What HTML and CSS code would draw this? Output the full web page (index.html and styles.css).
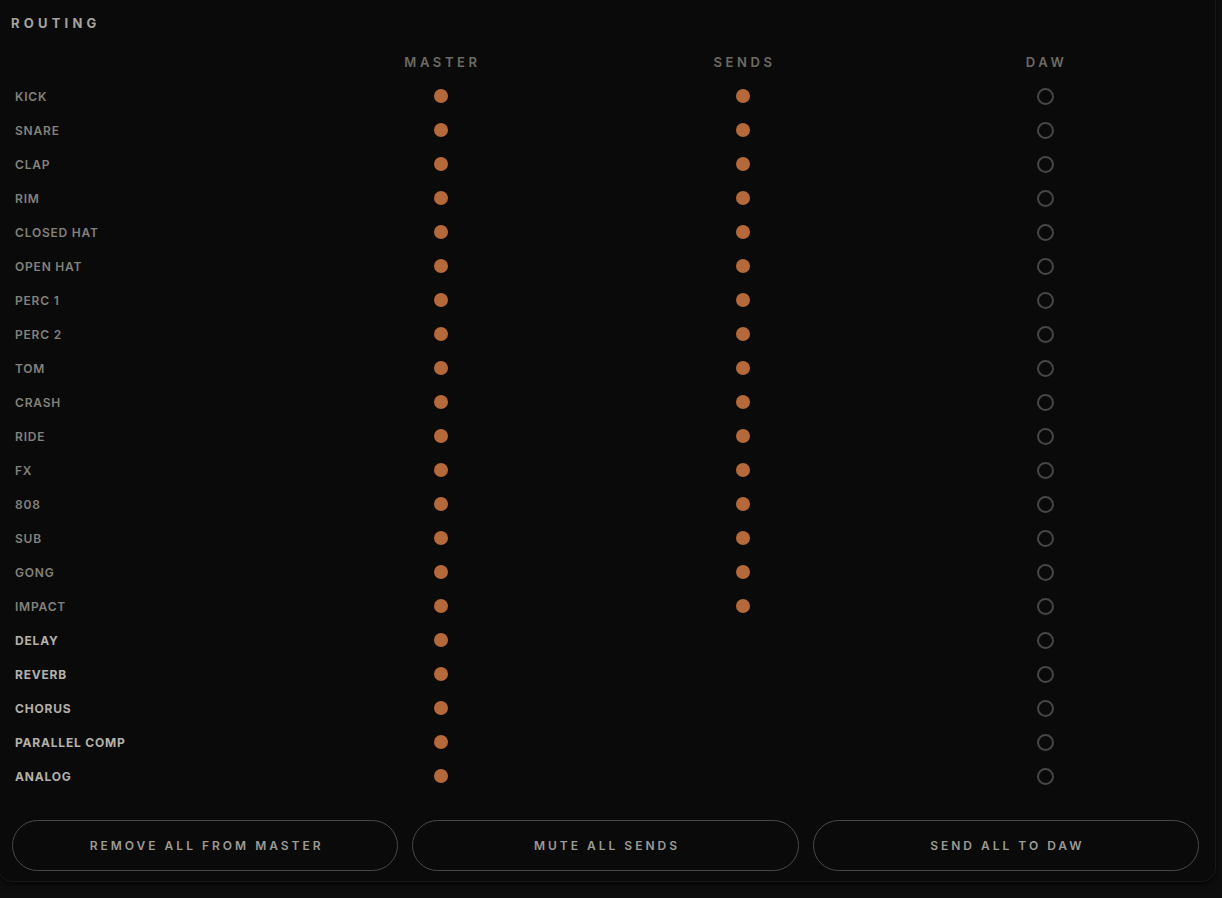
FILE: index.html
```html
<!DOCTYPE html>
<html>
<head>
<meta charset="utf-8">
<link rel="stylesheet" href="styles.css">
</head>
<body>
<div class="panel">
  <div class="title">ROUTING</div>
  <div class="grid">
    <div class="head-spacer"></div>
    <div class="col-head">MASTER</div>
    <div class="col-head">SENDS</div>
    <div class="col-head">DAW</div>

    <div class="label">KICK</div><div class="cell"><span class="dot on"></span></div><div class="cell"><span class="dot on"></span></div><div class="cell"><span class="dot off"></span></div>
    <div class="label">SNARE</div><div class="cell"><span class="dot on"></span></div><div class="cell"><span class="dot on"></span></div><div class="cell"><span class="dot off"></span></div>
    <div class="label">CLAP</div><div class="cell"><span class="dot on"></span></div><div class="cell"><span class="dot on"></span></div><div class="cell"><span class="dot off"></span></div>
    <div class="label">RIM</div><div class="cell"><span class="dot on"></span></div><div class="cell"><span class="dot on"></span></div><div class="cell"><span class="dot off"></span></div>
    <div class="label">CLOSED HAT</div><div class="cell"><span class="dot on"></span></div><div class="cell"><span class="dot on"></span></div><div class="cell"><span class="dot off"></span></div>
    <div class="label">OPEN HAT</div><div class="cell"><span class="dot on"></span></div><div class="cell"><span class="dot on"></span></div><div class="cell"><span class="dot off"></span></div>
    <div class="label">PERC 1</div><div class="cell"><span class="dot on"></span></div><div class="cell"><span class="dot on"></span></div><div class="cell"><span class="dot off"></span></div>
    <div class="label">PERC 2</div><div class="cell"><span class="dot on"></span></div><div class="cell"><span class="dot on"></span></div><div class="cell"><span class="dot off"></span></div>
    <div class="label">TOM</div><div class="cell"><span class="dot on"></span></div><div class="cell"><span class="dot on"></span></div><div class="cell"><span class="dot off"></span></div>
    <div class="label">CRASH</div><div class="cell"><span class="dot on"></span></div><div class="cell"><span class="dot on"></span></div><div class="cell"><span class="dot off"></span></div>
    <div class="label">RIDE</div><div class="cell"><span class="dot on"></span></div><div class="cell"><span class="dot on"></span></div><div class="cell"><span class="dot off"></span></div>
    <div class="label">FX</div><div class="cell"><span class="dot on"></span></div><div class="cell"><span class="dot on"></span></div><div class="cell"><span class="dot off"></span></div>
    <div class="label">808</div><div class="cell"><span class="dot on"></span></div><div class="cell"><span class="dot on"></span></div><div class="cell"><span class="dot off"></span></div>
    <div class="label">SUB</div><div class="cell"><span class="dot on"></span></div><div class="cell"><span class="dot on"></span></div><div class="cell"><span class="dot off"></span></div>
    <div class="label">GONG</div><div class="cell"><span class="dot on"></span></div><div class="cell"><span class="dot on"></span></div><div class="cell"><span class="dot off"></span></div>
    <div class="label">IMPACT</div><div class="cell"><span class="dot on"></span></div><div class="cell"><span class="dot on"></span></div><div class="cell"><span class="dot off"></span></div>
    <div class="label fx">DELAY</div><div class="cell"><span class="dot on"></span></div><div class="cell"></div><div class="cell"><span class="dot off"></span></div>
    <div class="label fx">REVERB</div><div class="cell"><span class="dot on"></span></div><div class="cell"></div><div class="cell"><span class="dot off"></span></div>
    <div class="label fx">CHORUS</div><div class="cell"><span class="dot on"></span></div><div class="cell"></div><div class="cell"><span class="dot off"></span></div>
    <div class="label fx">PARALLEL COMP</div><div class="cell"><span class="dot on"></span></div><div class="cell"></div><div class="cell"><span class="dot off"></span></div>
    <div class="label fx">ANALOG</div><div class="cell"><span class="dot on"></span></div><div class="cell"></div><div class="cell"><span class="dot off"></span></div>
  </div>
  <div class="buttons">
    <button class="btn">REMOVE ALL FROM MASTER</button>
    <button class="btn">MUTE ALL SENDS</button>
    <button class="btn">SEND ALL TO DAW</button>
  </div>
</div>
</body>
</html>
```
FILE: styles.css
```css
html, body {
  margin: 0;
  padding: 0;
  background: #0e0e0e;
  height: 898px;
  overflow: hidden;
}
body {
  font-family: "Inter", "Liberation Sans", sans-serif;
}
.panel {
  box-sizing: border-box;
  width: 1218px;
  height: 894px;
  margin: -12px 0 0 -2px;
  padding: 27px 16px 12px 13px;
  background: #0a0a0a;
  border: 1px solid #171717;
  border-radius: 14px;
  box-shadow: 0 3px 6px rgba(0,0,0,0.6);
}
.title {
  height: 14px;
  line-height: 14px;
  font-size: 13px;
  font-weight: 700;
  letter-spacing: 4.2px;
  color: #a6a29c;
  margin-left: -1px;
}
.grid {
  display: grid;
  grid-template-columns: 278px 302px 302px 302px;
  grid-template-rows: 27px repeat(21, 34px);
  margin-top: 22px;
}
.head-spacer { height: 20px; }
.col-head {
  align-self: start;
  height: 20px;
  line-height: 20px;
  text-align: center;
  font-size: 13px;
  font-weight: 600;
  letter-spacing: 3.6px;
  padding-left: 3px;
  color: #6d6a66;
}
.label {
  display: flex;
  align-items: center;
  padding-left: 3px;
  font-size: 12px;
  font-weight: 600;
  letter-spacing: 0.8px;
  color: #84817c;
}
.label.fx {
  color: #b3b0ab;
  font-weight: 700;
}
.cell {
  display: flex;
  align-items: center;
  justify-content: center;
}
.dot {
  display: block;
  box-sizing: border-box;
  border-radius: 50%;
}
.dot.on {
  width: 14px;
  height: 14px;
  background: #b5693a;
}
.dot.off {
  width: 17px;
  height: 17px;
  border: 2px solid #474645;
}
.buttons {
  display: flex;
  gap: 14px;
  margin-top: 27px;
  width: 1187px;
}
.btn {
  flex: 1;
  height: 51px;
  background: transparent;
  border: 1.5px solid #4a4845;
  border-radius: 26px;
  color: #9d9a95;
  font-family: "Inter", "Liberation Sans", sans-serif;
  font-size: 12px;
  font-weight: 600;
  letter-spacing: 3px;
  padding: 0 0 0 3px;
}
```
